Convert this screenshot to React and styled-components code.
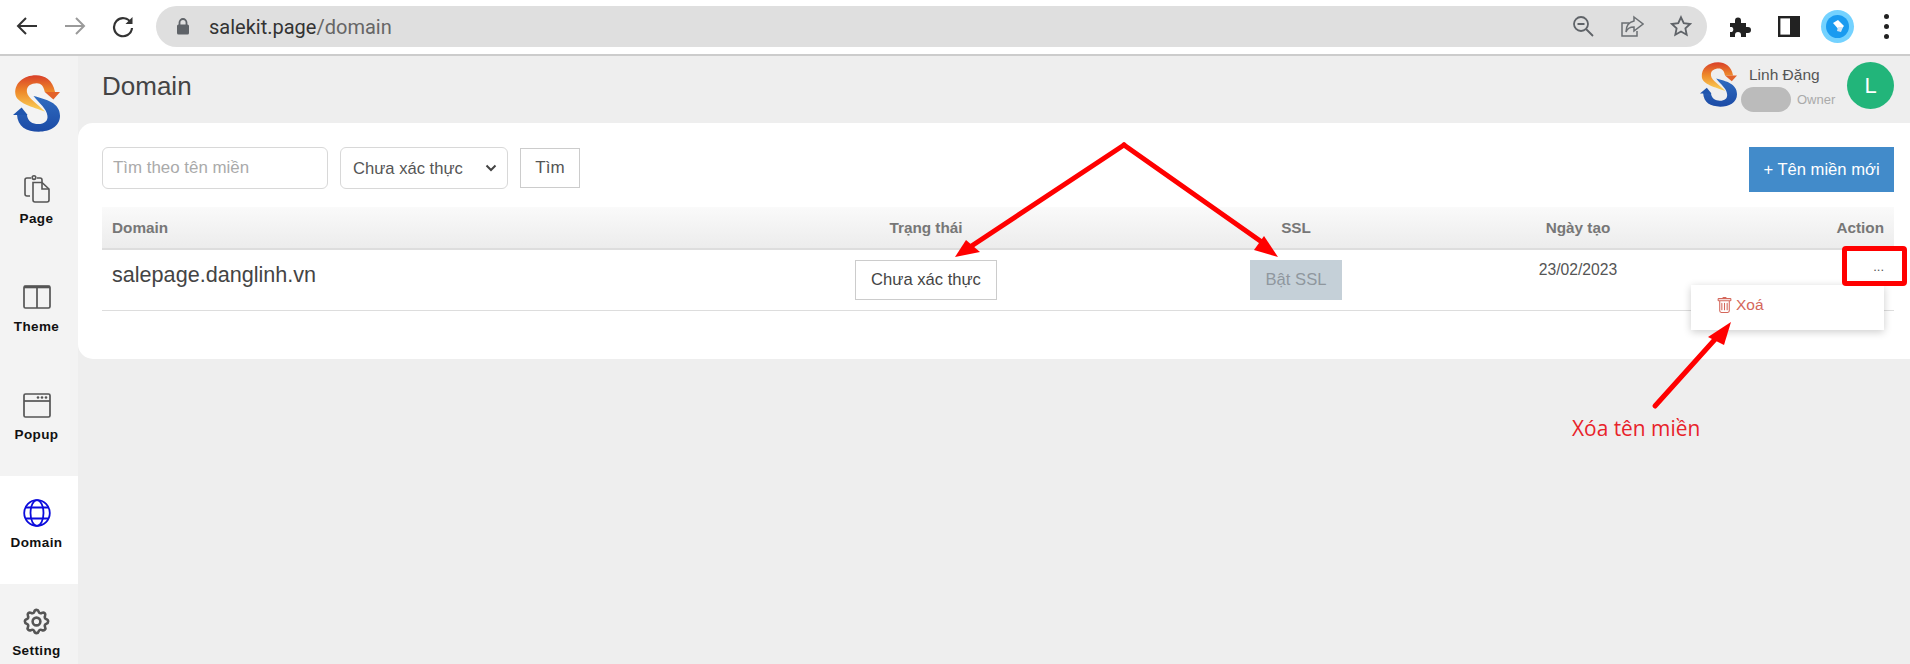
import React from "react";
import styled, { createGlobalStyle } from "styled-components";
import { HiOutlineCog } from "react-icons/hi";
import { BsTrash } from "react-icons/bs";

const GlobalStyle = createGlobalStyle`
  html, body { margin: 0; padding: 0; background: #eee; }
  * { box-sizing: border-box; }
  body { font-family: "Liberation Sans", Arial, sans-serif; color: #333; }
`;

// the S logo, used in the sidebar and next to the user name
function Logo({ width, height }) {
  return (
    <svg width={width} height={height} viewBox="0 0 142 170">
      <defs>
        <linearGradient id="logoTop" x1="0" y1="0" x2="0" y2="1">
          <stop offset="0" stopColor="#d9402a" />
          <stop offset="0.45" stopColor="#ee8a2a" />
          <stop offset="1" stopColor="#fbd45a" />
        </linearGradient>
        <linearGradient id="logoBottom" x1="0" y1="0" x2="0" y2="1">
          <stop offset="0" stopColor="#2f6cc0" />
          <stop offset="1" stopColor="#1c4ba6" />
        </linearGradient>
      </defs>
      <path
        fill="url(#logoTop)"
        d="M127 50 C120 14 95 0 70 0 C30 0 5 25 7 55 C9 85 60 95 97 110 C75 85 45 70 42 50 C40 32 55 24 72 24 C85 24 92 32 96 50 Z"
      />
      <path fill="#e2622a" d="M142 50 L96 50 L122 73 Z" />
      <path
        fill="url(#logoBottom)"
        d="M62 62 C100 72 142 82 142 122 C142 155 110 170 78 170 C40 170 14 155 12 118 L42 118 C44 140 60 147 76 147 C95 147 106 138 104 122 C102 100 80 85 62 62 Z"
      />
      <path fill="#1f55ae" d="M0 120 L26 97 L44 120 Z" />
    </svg>
  );
}

const PageIcon = () => (
  <svg width="26" height="28" viewBox="0 0 26 28" fill="none" stroke="#555" strokeWidth="1.6">
    <path d="M6 21 H3 Q1 21 1 19 V5 Q1 3 3 3 H7 M13 3 H16 Q18 3 18 5 V7" />
    <circle cx="10" cy="2.6" r="1.8" />
    <path d="M9 7.5 H18 L25 14 V25 Q25 27 23 27 H11 Q9 27 9 25 Z" />
    <path d="M18 7.5 V14 H25" />
  </svg>
);

const ThemeIcon = () => (
  <svg width="28" height="24" viewBox="0 0 28 24" fill="none" stroke="#555" strokeWidth="1.7">
    <rect x="1" y="1" width="26" height="22" rx="1.5" />
    <path d="M1 2 H27" strokeWidth="2.6" />
    <path d="M14 2 V23" />
  </svg>
);

const PopupIcon = () => (
  <svg width="28" height="25" viewBox="0 0 28 25" fill="none" stroke="#555" strokeWidth="1.7">
    <rect x="1" y="1" width="26" height="23" rx="1.5" />
    <path d="M1 8 H27" />
    <g fill="#555" stroke="none">
      <circle cx="15" cy="4.5" r="1.3" />
      <circle cx="19" cy="4.5" r="1.3" />
      <circle cx="23" cy="4.5" r="1.3" />
    </g>
  </svg>
);

const GlobeIcon = () => (
  <svg width="28" height="28" viewBox="0 0 28 28" fill="none" stroke="#0b0bdc" strokeWidth="1.8">
    <circle cx="14" cy="14" r="12.8" />
    <ellipse cx="14" cy="14" rx="6.5" ry="12.8" />
    <path d="M3 8.5 H25 M3 19.5 H25" />
  </svg>
);

const NAV_ITEMS = [
  { label: "Page", icon: <PageIcon /> },
  { label: "Theme", icon: <ThemeIcon /> },
  { label: "Popup", icon: <PopupIcon /> },
  { label: "Domain", icon: <GlobeIcon />, active: true },
  { label: "Setting", icon: <HiOutlineCog size={31} color="#555" /> },
];

function Toolbar() {
  return (
    <BrowserBar>
      <NavIcon $left={15} $color="#333">
        <svg width="24" height="24" viewBox="0 0 24 24" fill="none" stroke="currentColor" strokeWidth="2">
          <path d="M22 12 H3 M11 4 L3 12 L11 20" />
        </svg>
      </NavIcon>
      <NavIcon $left={24} $color="#9a9a9a">
        <svg width="24" height="24" viewBox="0 0 24 24" fill="none" stroke="currentColor" strokeWidth="2">
          <path d="M2 12 H21 M13 4 L21 12 L13 20" />
        </svg>
      </NavIcon>
      <NavIcon $left={24} $color="#333">
        <svg width="24" height="24" viewBox="0 0 24 24" fill="none" stroke="currentColor" strokeWidth="2.2">
          <path d="M20 9 A9 9 0 1 0 21 14" />
          <path d="M21.5 3 V10 H14.5 Z" fill="currentColor" stroke="none" />
        </svg>
      </NavIcon>
      <AddressBar>
        <svg width="14" height="17" viewBox="0 0 14 17">
          <path d="M3.5 7 V4.5 A3.5 3.5 0 0 1 10.5 4.5 V7" fill="none" stroke="#5f6368" strokeWidth="1.8" />
          <rect x="1" y="6.5" width="12" height="10" rx="1.5" fill="#5f6368" />
        </svg>
        <Url>
          salekit.page<UrlPath>/domain</UrlPath>
        </Url>
        <AddressActions>
          <svg width="22" height="22" viewBox="0 0 22 22" fill="none" stroke="#5f6368" strokeWidth="1.8">
            <circle cx="9" cy="9" r="7" />
            <path d="M5.5 9 H12.5 M14 14 L21 21" />
          </svg>
          <svg width="24" height="22" viewBox="0 0 24 22" fill="none" stroke="#6b6f73" strokeWidth="1.5">
            <path d="M9 8 H2 V21 H17 V16" />
            <path d="M14 2 L23 9 L14 16 V12 C10 12 7 14 6 17 C6 11 9 7 14 6 Z" />
          </svg>
          <svg width="22" height="22" viewBox="0 0 24 24" fill="none" stroke="#5f6368" strokeWidth="2">
            <path d="M12 2.5 L15 9 L22 9.8 L16.8 14.6 L18.2 21.5 L12 18 L5.8 21.5 L7.2 14.6 L2 9.8 L9 9 Z" />
          </svg>
        </AddressActions>
      </AddressBar>
      <BrowserActions>
        <svg width="23" height="22" viewBox="0 0 23 22" fill="#222">
          <path d="M1 8 H6 V5.5 A3 3 0 0 1 12 5.5 V8 H17 V12 H19 A3 3 0 0 1 19 18 H17 V22 H12 V20 A3 3 0 0 0 6 20 V22 H1 V17 H3 A3 3 0 0 0 3 12 H1 Z" />
        </svg>
        <svg width="22" height="21" viewBox="0 0 22 21">
          <rect x="1.2" y="1.2" width="19.6" height="18.6" fill="none" stroke="#222" strokeWidth="2.4" />
          <rect x="12" y="1" width="9" height="19" fill="#222" />
        </svg>
        <ExtensionBadge>
          <svg width="23" height="23" viewBox="0 0 23 23">
            <circle cx="11.5" cy="11.5" r="11.5" fill="#1a9bf0" />
            <path d="M7 8 L12 5 L18 11 L14 16 Z" fill="#fff" />
            <path d="M12 12 L17 12 L15 17 L11 16 Z" fill="#cfe4f5" />
          </svg>
        </ExtensionBadge>
        <Kebab>
          <i />
          <i />
          <i />
        </Kebab>
      </BrowserActions>
    </BrowserBar>
  );
}

export default function App() {
  return (
    <Page>
      <GlobalStyle />
      <Toolbar />
      <Body>
        <Sidebar>
          <SideLogo>
            <Logo width={47} height={57} />
          </SideLogo>
          {NAV_ITEMS.map((item) => (
            <NavItem key={item.label} $active={item.active}>
              <NavGlyph>{item.icon}</NavGlyph>
              <NavLabel>{item.label}</NavLabel>
            </NavItem>
          ))}
        </Sidebar>
        <Main>
          <Header>
            <Title>Domain</Title>
            <UserBox>
              <Logo width={37} height={45} />
              <UserText>
                <UserName>Linh Đặng</UserName>
                <RoleRow>
                  <Pill />
                  <Role>Owner</Role>
                </RoleRow>
              </UserText>
              <Avatar>L</Avatar>
            </UserBox>
          </Header>
          <Panel>
            <Filters>
              <SearchInput placeholder="Tìm theo tên miền" />
              <SelectBox>
                <Select defaultValue="no">
                  <option value="no">Chưa xác thực</option>
                  <option value="yes">Đã xác thực</option>
                </Select>
                <svg width="12" height="8" viewBox="0 0 12 8" fill="none" stroke="#444" strokeWidth="2">
                  <path d="M1.5 1.5 L6 6 L10.5 1.5" />
                </svg>
              </SelectBox>
              <SearchButton>Tìm</SearchButton>
              <NewButton>+ Tên miền mới</NewButton>
            </Filters>
            <Table>
              <HeadRow>
                <HeadCell>Domain</HeadCell>
                <HeadCell $align="center">Trạng thái</HeadCell>
                <HeadCell $align="center">SSL</HeadCell>
                <HeadCell $align="center">Ngày tạo</HeadCell>
                <HeadCell $align="right">Action</HeadCell>
              </HeadRow>
              <Row>
                <DomainName>salepage.danglinh.vn</DomainName>
                <Cell $align="center">
                  <StatusButton>Chưa xác thực</StatusButton>
                </Cell>
                <Cell $align="center">
                  <SslButton>Bật SSL</SslButton>
                </Cell>
                <DateCell>23/02/2023</DateCell>
                <ActionCell>
                  <Dots>...</Dots>
                  <Menu>
                    <MenuItem>
                      <BsTrash size={17} />
                      Xoá
                    </MenuItem>
                  </Menu>
                </ActionCell>
              </Row>
            </Table>
          </Panel>
        </Main>
      </Body>

      {/* red marks drawn over the screenshot */}
      <Marks width="1910" height="664" viewBox="0 0 1910 664">
        <g stroke="#f00" strokeWidth="5" fill="none" strokeLinecap="round">
          <path d="M1124 145 L970 247" />
          <path d="M1124 145 L1266 245" />
          <path d="M1655 406 L1718 336" />
          <rect x="1844.5" y="248.5" width="60" height="35" rx="1.5" strokeLinejoin="round" />
        </g>
        <g fill="#f00">
          <path d="M955 257 L966 240 L980 252 Z" />
          <path d="M1278 257 L1254 250 L1264 236 Z" />
          <path d="M1731 322 L1708 337 L1724 345 Z" />
        </g>
      </Marks>
      <MarkText>Xóa tên miền</MarkText>
    </Page>
  );
}

const Page = styled.div`
  position: relative;
  width: 1910px;
  height: 664px;
  overflow: hidden;
  background: #eee;
`;

const BrowserBar = styled.div`
  height: 56px;
  display: flex;
  align-items: center;
  padding-bottom: 2px;
  background: #fff;
  border-bottom: 2px solid #ccc;
`;

const NavIcon = styled.span`
  display: flex;
  margin-left: ${(p) => p.$left}px;
  color: ${(p) => p.$color};
`;

const AddressBar = styled.div`
  width: 1551px;
  height: 41px;
  margin-left: 21px;
  padding: 0 15px 0 20px;
  display: flex;
  align-items: center;
  background: #dfdfdf;
  border-radius: 21px;
`;

const Url = styled.div`
  margin: 2px 0 0 19px;
  font-family: Roboto, "Liberation Sans", sans-serif;
  font-size: 20px;
  color: #333;
`;

const UrlPath = styled.span`
  color: #666;
`;

const AddressActions = styled.div`
  margin-left: auto;
  display: flex;
  align-items: center;
  gap: 26px;
`;

const BrowserActions = styled.div`
  margin-left: 22px;
  display: flex;
  align-items: center;
  gap: 26px;
`;

const ExtensionBadge = styled.div`
  width: 33px;
  height: 33px;
  margin-left: -5px;
  border-radius: 50%;
  background: #74d2ff;
  display: flex;
  align-items: center;
  justify-content: center;
`;

const Kebab = styled.div`
  display: flex;
  flex-direction: column;
  gap: 5px;
  margin-left: 4px;
  i {
    width: 5px;
    height: 5px;
    border-radius: 50%;
    background: #222;
  }
`;

const Body = styled.div`
  display: flex;
  height: 608px;
`;

const Sidebar = styled.nav`
  width: 78px;
  flex: none;
  background: #f3f3f3;
`;

const SideLogo = styled.div`
  height: 96px;
  padding: 19px 0 0 13px;
  display: flex;
`;

const NavItem = styled.a`
  height: 108px;
  padding: 23px 5px 0 0;
  display: flex;
  flex-direction: column;
  align-items: center;
  background: ${(p) => (p.$active ? "#fff" : "transparent")};
`;

const NavGlyph = styled.div`
  height: 28px;
  display: flex;
  align-items: center;
  justify-content: center;
`;

const NavLabel = styled.div`
  margin-top: 8px;
  font-size: 13.5px;
  font-weight: bold;
  letter-spacing: 0.4px;
  color: #111;
`;

const Main = styled.main`
  flex: 1;
  min-width: 0;
`;

const Header = styled.header`
  height: 67px;
  padding: 0 16px 0 24px;
  display: flex;
  align-items: flex-start;
  justify-content: space-between;
`;

const Title = styled.h1`
  margin: 15px 0 0;
  font-size: 26px;
  font-weight: normal;
  line-height: 30px;
  color: #444;
`;

const UserBox = styled.div`
  margin-top: 6px;
  display: flex;
  align-items: flex-start;
`;

const UserText = styled.div`
  margin-left: 4px;
  display: flex;
  flex-direction: column;
  width: 106px;
`;

const UserName = styled.div`
  margin: 4px 0 0 8px;
  font-size: 15.5px;
  line-height: 18px;
  color: #555;
`;

const RoleRow = styled.div`
  display: flex;
  align-items: center;
  margin-top: 3px;
`;

const Pill = styled.div`
  width: 50px;
  height: 25px;
  border-radius: 13px;
  background: #bbb;
`;

const Role = styled.span`
  margin-left: 6px;
  font-size: 13px;
  color: #aaa;
`;

const Avatar = styled.div`
  width: 47px;
  height: 47px;
  border-radius: 50%;
  background: #22b57a;
  color: #fff;
  font-size: 22px;
  display: flex;
  align-items: center;
  justify-content: center;
`;

const Panel = styled.section`
  height: 236px;
  padding: 24px 16px 0 24px;
  background: #fff;
  border-radius: 15px 0 0 15px;
`;

const Filters = styled.div`
  height: 60px;
  display: flex;
  align-items: flex-start;
`;

const SearchInput = styled.input`
  width: 226px;
  height: 42px;
  padding: 0 10px;
  border: 1px solid #d8d8d8;
  border-radius: 6px;
  outline: none;
  font-family: inherit;
  font-size: 16.9px;
  color: #444;
  &::placeholder {
    color: #aaa;
  }
`;

const SelectBox = styled.div`
  width: 168px;
  height: 42px;
  margin-left: 12px;
  padding: 0 10px 0 12px;
  display: flex;
  align-items: center;
  border: 1px solid #d8d8d8;
  border-radius: 6px;
`;

const Select = styled.select`
  flex: 1;
  min-width: 0;
  padding: 0;
  border: 0;
  outline: none;
  appearance: none;
  background: transparent;
  font-family: inherit;
  font-size: 16.6px;
  color: #555;
`;

const SearchButton = styled.button`
  width: 60px;
  height: 40px;
  margin: 1px 0 0 12px;
  padding: 0;
  background: #fff;
  border: 1px solid #ccc;
  font-family: inherit;
  font-size: 17px;
  color: #555;
`;

const NewButton = styled.button`
  width: 145px;
  height: 45px;
  margin-left: auto;
  padding: 0;
  background: #428bca;
  border: 0;
  font-family: inherit;
  font-size: 16.6px;
  color: #fff;
`;

const Table = styled.div`
  display: grid;
  grid-template-columns: 598px 452px 288px 276px 178px;
`;

const HeadRow = styled.div`
  grid-column: 1 / -1;
  display: grid;
  grid-template-columns: subgrid;
  height: 43px;
  background: linear-gradient(#fafafa, #ececec);
  border-bottom: 2px solid #ddd;
`;

const HeadCell = styled.div`
  padding: 0 10px;
  font-size: 15.3px;
  font-weight: bold;
  line-height: 41px;
  color: #777;
  text-align: ${(p) => p.$align || "left"};
`;

const Row = styled.div`
  grid-column: 1 / -1;
  display: grid;
  grid-template-columns: subgrid;
  height: 61px;
  border-bottom: 1px solid #ddd;
`;

const Cell = styled.div`
  padding-top: 10px;
  text-align: ${(p) => p.$align || "left"};
`;

const DomainName = styled.div`
  padding: 9px 10px 0;
  font-size: 21.6px;
  line-height: 32px;
  color: #444;
`;

const StatusButton = styled.button`
  width: 142px;
  height: 40px;
  padding: 0;
  background: #fff;
  border: 1px solid #ccc;
  font-family: inherit;
  font-size: 16.6px;
  color: #444;
`;

const SslButton = styled.button`
  width: 92px;
  height: 40px;
  padding: 0;
  background: #c5d0d8;
  border: 0;
  font-family: inherit;
  font-size: 16.6px;
  color: #8f979e;
`;

const DateCell = styled.div`
  padding-top: 10px;
  font-size: 15.7px;
  line-height: 20px;
  color: #555;
  text-align: center;
`;

const ActionCell = styled.div`
  position: relative;
  padding: 7px 10px 0 0;
  text-align: right;
`;

const Dots = styled.span`
  font-size: 13px;
  color: #555;
`;

const Menu = styled.div`
  position: absolute;
  top: 35px;
  right: 10px;
  width: 193px;
  height: 45px;
  padding: 0 0 5px 25px;
  display: flex;
  align-items: center;
  background: #fff;
  box-shadow: 0 2px 8px rgba(0, 0, 0, 0.2);
`;

const MenuItem = styled.div`
  display: flex;
  align-items: center;
  gap: 3px;
  font-size: 15.5px;
  color: #d4675b;
`;

const Marks = styled.svg`
  position: absolute;
  top: 0;
  left: 0;
  pointer-events: none;
`;

const MarkText = styled.div`
  position: absolute;
  left: 1572px;
  top: 414px;
  font-family: "Open Sans", "Noto Sans", sans-serif;
  font-size: 20.9px;
  line-height: 28px;
  color: #e8222a;
`;
